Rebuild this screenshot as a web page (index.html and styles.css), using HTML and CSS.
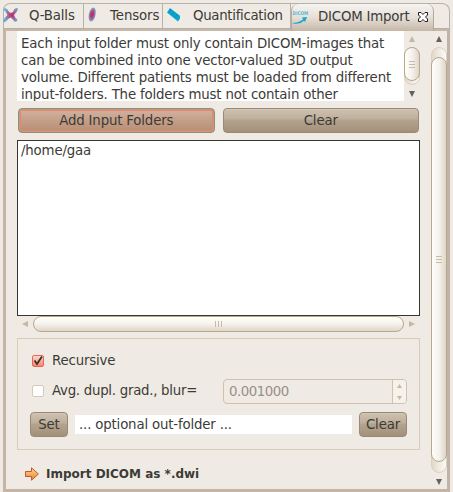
FILE: index.html
```html
<!DOCTYPE html>
<html lang="en">
<head>
<meta charset="utf-8">
<title>DICOM Import</title>
<link rel="stylesheet" href="styles.css">
</head>
<body>
<div class="window">
  <nav class="tabs">
    <div class="tab tab-balls">
      <svg class="icon" width="18" height="18" viewBox="0 0 18 18"><defs><radialGradient id="b" gradientUnits="userSpaceOnUse" cx="9" cy="9" r="9"><stop offset="0" stop-color="#d02058"/><stop offset=".35" stop-color="#a8588f"/><stop offset=".9" stop-color="#6aaed2"/></radialGradient></defs><path d="M0 3.2Q2 1.300 4 3Q6 6.500 8 7Q10.500 6 11.500 3Q13.500 1.300 15 2.500Q15 5 11 9Q12 12 14.500 13.500Q14 16.500 11.500 15.500L8 11.500Q5 12 3.500 15Q1.500 17 0 15.500Q0 13 4.500 9Q3 5.500 0 3.200Z" fill="url(#b)"/></svg>
      <span class="t-balls">Q-Balls</span>
    </div>
    <div class="tab tab-tensors">
      <svg class="icon" width="18" height="18" viewBox="0 0 18 18"><defs><radialGradient id="t"><stop offset="0" stop-color="#d41e54"/><stop offset=".45" stop-color="#b0447a"/><stop offset="1" stop-color="#7fb0d6"/></radialGradient></defs><ellipse cx="9.200" cy="8.500" rx="3.400" ry="7.200" transform="rotate(12 9.200 8.500)" fill="url(#t)"/></svg>
      <span class="t-tensors">Tensors</span>
    </div>
    <div class="tab tab-quant">
      <svg class="icon" width="18" height="18" viewBox="0 0 18 18"><path d="M8.500 2L19.500 10.500L16.500 15.500L5.500 6.500Z" transform="translate(-.500)" fill="#08a5cf"/><path d="M7.500 6L9 4M10.500 8.400L12 6.500M13.500 11L15 8.900" stroke="#0784ad" stroke-width=".8"/></svg>
      <span class="t-quant">Quantification</span>
    </div>
    <div class="tab tab-active">
      <svg class="icon" width="18" height="18" viewBox="0 0 18 18"><text x="1.500" y="7" class="logo" textLength="15.500" lengthAdjust="spacingAndGlyphs">DICOM</text><path d="M1 15Q7 15 12 11.500L11 9.500L16 9L14 14L13 12.700Q8 17.500 1 15Z" fill="#12a9d0"/></svg>
      <span class="t-import">DICOM Import</span>
      <svg class="close" width="12" height="12" viewBox="0 0 12 12"><path d="M1.500 1.500H4L6 3.500L8 1.500H10.500V4L8.500 6L10.500 8V10.500H8L6 8.500L4 10.500H1.500V8L3.500 6L1.500 4Z" fill="#fff" stroke="#1d1d1b"/></svg>
    </div>
  </nav>
  <main class="page">
    <div class="column">
      <section class="help">
        <p class="help-text"><span>Each input folder must only contain DICOM-images that</span><br><span>can be combined into one vector-valued 3D output</span><br><span>volume. Different patients must be loaded from different</span><br><span>input-folders. The folders must not contain other</span></p>
        <div class="vscroll small">
          <svg class="arrow faded" width="6" height="6"><path d="M0 6L3 0L6 6Z"/></svg>
          <div class="trough"><div class="thumb grip"></div></div>
          <svg class="arrow" width="6" height="6"><path d="M0 0H6L3 6Z"/></svg>
        </div>
      </section>
      <div class="actions">
        <button class="btn hot"><span>Add Input Folders</span></button>
        <button class="btn"><span>Clear</span></button>
      </div>
      <div class="list"><span>/home/gaa</span></div>
      <div class="hscroll">
        <svg class="arrow faded" width="6" height="6"><path d="M6 0V6L0 3Z"/></svg>
        <div class="hthumb"></div>
        <svg class="arrow faded" width="6" height="6"><path d="M0 0V6L6 3Z"/></svg>
      </div>
      <section class="group">
        <label class="option"><svg class="box checked" width="12" height="12" viewBox="1 1 10 10"><path d="M2.500 5.500L5 9L10 1.500" fill="none" stroke="#3a302c" stroke-width="1.800"/></svg><span>Recursive</span></label>
        <div class="option second"><span class="box"></span><span class="t-blur">Avg. dupl. grad., blur=</span>
          <div class="spin"><span class="value">0.001000</span><div class="steps"><svg width="5" height="4"><path d="M0 4L2.500 0L5 4Z"/></svg><svg width="5" height="4"><path d="M0 0H5L2.500 4Z"/></svg></div></div>
        </div>
        <div class="folder"><button class="btn set">Set</button><div class="field"><span>... optional out-folder ...</span></div><button class="btn clear">Clear</button></div>
      </section>
      <div class="import">
        <svg width="14" height="14" viewBox="0 0 14 14"><defs><linearGradient id="o" x2="0" y2="1"><stop stop-color="#f8dc9c"/><stop offset="1" stop-color="#e88324"/></linearGradient></defs><path d="M.5 4.500H6.500V.8L13.400 7L6.500 13.200V9.500H.5Z" fill="url(#o)" stroke="#c4572b"/></svg>
        <b>Import DICOM as *.dwi</b>
      </div>
    </div>
    <div class="vscroll large">
      <svg class="arrow" width="6" height="6"><path d="M0 6L3 0L6 6Z"/></svg>
      <div class="trough"><div class="thumb grip"></div></div>
      <svg class="arrow" width="6" height="6"><path d="M0 0H6L3 6Z"/></svg>
    </div>
  </main>
</div>
</body>
</html>
```
FILE: styles.css
```css
* { box-sizing: border-box; }
body { margin: 0; background: #efebe4; color: #3c3b37; font: 13.33px/17px "DejaVu Sans", sans-serif; letter-spacing: -.17px; overflow: hidden; }
svg { display: block; flex: none; }
span, b { white-space: nowrap; }
.window { width: 447px; height: 489px; margin: 3px 0 0 3px; display: flex; flex-direction: column; }
.tabs { height: 28px; flex: none; display: flex; border-radius: 7px 8px 0 0; background: linear-gradient(#efebe4 24px, #b3b0a8 24px 25px, #c6b7a7 25px); border: 1px solid #b5b2aa; border-bottom: 0; }
.tab { height: 24px; display: flex; align-items: center; border-right: 1px solid #b5b2aa; flex: none; padding-bottom: 2px; }
.icon { margin-left: -1px; }
.tab-balls { width: 80px; }
.tab-tensors { width: 79px; }
.tab-quant { width: 128px; }
.tab-active { width: 143px; height: 27px; background: linear-gradient(#f6f4f1, #e5dfd7 50%, #c6b7a7); border: 1px solid #b5a999; border-width: 0 1px; border-radius: 7px 7px 0 0; padding-bottom: 2px; }
.t-balls { margin-left: 8px; }
.t-tensors { margin-left: 9px; letter-spacing: -.1px; }
.t-quant { margin-left: 13px; letter-spacing: -.3px; }
.t-import { margin-left: 9px; letter-spacing: -.2px; }
.close { margin: 1px 0 0 7px; }
.logo { font: bold 5px "DejaVu Sans", sans-serif; letter-spacing: 0; fill: #58b9d2; }
.page { flex: 1; min-height: 0; display: flex; justify-content: space-between; padding-left: 11px; border: 3px solid #c4b5a5; border-top: 0; border-right-color: #bfb4a7; }
.column { width: 403px; display: flex; flex-direction: column; }
.help { height: 70px; display: flex; flex: none; }
.help-text { width: 387px; height: 70px; margin: 0; padding: 4px 0 0 4px; background: #fff; overflow: hidden; }
.vscroll { width: 16px; display: flex; flex-direction: column; align-items: center; flex: none; }
.arrow { fill: #62625e; }
.faded { fill: #c5b9a4; }
.small { padding-top: 5px; }
.small .trough { margin: 5px 0 6px; height: 38px; }
.trough { width: 16px; border-radius: 8px; background: linear-gradient(90deg, #e1d8ca, #fcfbf9); border: 1px solid #d9d0c2; }
.thumb { width: 16px; margin: -1px; border: 1px solid #b9a88c; border-radius: 8px; background: linear-gradient(90deg, #fffefb, #f5f2ec 50%, #e0d6c8); display: flex; align-items: center; justify-content: center; }
.small .thumb { height: 34px; }
.grip::after { content: ""; width: 6px; height: 7px; background: repeating-linear-gradient(#c8bca9 0 1px, transparent 1px 3px); }
.large { padding-top: 5px; }
.large .trough { height: 426px; margin: 5px 0 6px; }
.large .thumb { margin-top: 9px; height: 405px; }
.actions { display: flex; gap: 8px; margin-top: 7px; padding: 0 1px; height: 25px; flex: none; }
.btn { flex: 1; height: 25px; padding: 0 0 1px; border: 1px solid #978a76; border-radius: 4px; background: linear-gradient(#cec1b1, #c0b19e 40%, #b3a38e 50%, #a39079); color: #3c3b37; font: inherit; letter-spacing: inherit; box-shadow: inset 0 1px #d8cdbe66; }
.hot { background: linear-gradient(#d4b3a2, #c49f89 50%, #b88d73); box-shadow: inset 0 0 0 1px #b5a08c, inset 0 0 0 2px #e98469; }
.list { height: 176px; margin-top: 7px; flex: none; border: 1px solid #343632; background: #fff; padding: 1px 3px; }
.hscroll { height: 16px; flex: none; display: flex; align-items: center; justify-content: space-between; padding: 0 5px; }
.hthumb { width: 371px; height: 16px; border: 1px solid #b9a88c; border-radius: 8px; background: linear-gradient(#fffefb, #f7f4ef 45%, #e0d6c8); display: flex; align-items: center; justify-content: center; }
.hthumb::after { content: ""; width: 7px; height: 6px; background: repeating-linear-gradient(90deg, #c8bca9 0 1px, transparent 1px 3px); }
.group { height: 112px; margin-top: 6px; flex: none; border: 1px solid #d7ccba; padding: 13px 12px 0; }
.option { height: 17px; display: flex; align-items: center; padding-left: 2px; }
.box { width: 12px; height: 12px; border: 1px solid #d7c9ba; border-radius: 2px; background: #fff; margin-right: 8px; flex: none; }
.checked { background: linear-gradient(#fad8cf, #f4866f); border-color: #e76751; margin-top: 1px; }
.second { height: 25px; margin-top: 10px; }
.second .box { margin-top: -1px; }
.t-blur { letter-spacing: -.27px; margin-top: -2px; }
.spin { margin-left: auto; width: 184px; height: 25px; display: flex; border: 1px solid #cfc2ae; border-radius: 4px; color: #969089; }
.value { flex: 1; padding: 3px 5px; letter-spacing: -.48px; }
.steps { width: 14px; border-left: 1px solid #cfc2ae; background: #f5f2ec; border-radius: 0 3px 3px 0; display: flex; flex-direction: column; justify-content: space-between; align-items: center; padding: 4px 0 3px; fill: #c5b9a4; }
.folder { display: flex; align-items: center; gap: 7px; margin-top: 8px; height: 25px; }
.set { flex: 0 0 38px; }
.clear { flex: 0 0 48px; }
.field { flex: 1; height: 19px; background: #fff; padding: 1px 4px; }
.import { display: flex; align-items: center; gap: 7px; margin: 15px 0 0 8px; height: 18px; font-size: 12px; letter-spacing: 0; }
```
